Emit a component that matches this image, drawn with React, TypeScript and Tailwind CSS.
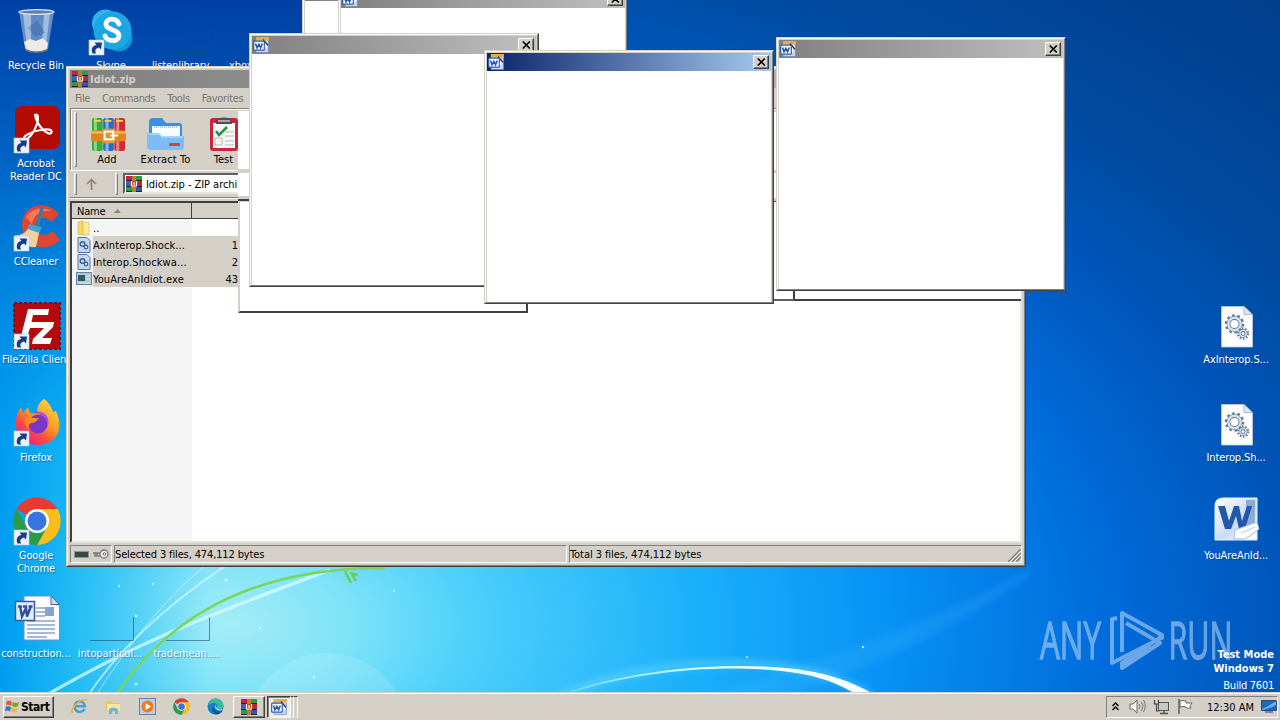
import type { ReactNode } from "react";

const FONT = "font-['DejaVu_Sans_Condensed','DejaVu_Sans',sans-serif]";

function Wallpaper() {
  return (
    <svg className="absolute inset-0" width="1280" height="720" viewBox="0 0 1280 720">
      <defs>
        <radialGradient id="sky" gradientUnits="userSpaceOnUse" cx="0" cy="0" r="1" gradientTransform="translate(230 625) scale(1560 910)">
          <stop offset="0" stopColor="#a4edf6" />
          <stop offset=".077" stopColor="#7ee3f8" />
          <stop offset=".154" stopColor="#4dd0fb" />
          <stop offset=".3" stopColor="#1cb0fa" />
          <stop offset=".43" stopColor="#0690f6" />
          <stop offset=".56" stopColor="#006cdc" />
          <stop offset=".68" stopColor="#0055b8" />
          <stop offset=".78" stopColor="#004aa0" />
          <stop offset="1" stopColor="#003c86" />
        </radialGradient>
        <linearGradient id="left" x1="0" x2="1" y1="0" y2="0">
          <stop offset="0" stopColor="#009cf0" />
          <stop offset=".35" stopColor="#04adf2" stopOpacity=".7" />
          <stop offset="1" stopColor="#00b0f5" stopOpacity="0" />
        </linearGradient>
        <linearGradient id="top" x1="0" x2="0" y1="0" y2="1">
          <stop offset="0" stopColor="#0040a4" />
          <stop offset=".35" stopColor="#0058bc" stopOpacity=".85" />
          <stop offset="1" stopColor="#0080e0" stopOpacity="0" />
        </linearGradient>
        <linearGradient id="arc" x1="0" x2="1" y1="0" y2="0">
          <stop offset="0" stopColor="#9ff" stopOpacity=".5" />
          <stop offset=".5" stopColor="#dff" />
          <stop offset="1" stopColor="#fff" />
        </linearGradient>
        <filter id="soft" x="-20%" y="-20%" width="140%" height="140%"><feGaussianBlur stdDeviation="3" /></filter>
        <filter id="fine"><feGaussianBlur stdDeviation=".7" /></filter>
      </defs>
      <rect width="1280" height="720" fill="url(#sky)" />
      <rect width="210" height="720" fill="url(#left)" />
      <rect width="480" height="450" fill="url(#top)" />
      <circle cx="327" cy="735" r="82" fill="#fff" opacity=".12" />
      <path d="M690 700 Q900 640 1030 568 L1030 576 Q910 660 770 700Z" fill="#5ac8ff" opacity=".14" filter="url(#soft)" />
      <g fill="none" filter="url(#fine)">
        <path d="M38 700 Q120 652 200 620 T330 570" stroke="#d6fbff" strokeWidth="3.5" opacity=".75" />
        <path d="M85 700 Q130 630 225 566" stroke="#d6fbff" strokeWidth="2" opacity=".7" />
        <path d="M93 700 Q150 610 205 566" stroke="#d6fbff" strokeWidth="1" opacity=".6" />
        <path d="M115 697 Q200 567 385 568" stroke="#7ad65a" strokeWidth="2.4" />
        <path d="M345 571 l6 12 M350 573 l8 2 M352 574 l4 7" stroke="#6ccf50" strokeWidth="2.5" />
      </g>
      <path d="M560 696 C640 660 790 645 872 696" fill="none" stroke="#7fe0ff" strokeWidth="8" opacity=".4" filter="url(#soft)" />
      <path d="M556 697 C620 672 690 666 740 666 C800 666 842 674 878 697 L860 697 C830 677 800 670 740 668.500 C690 667.500 620 675 556 697Z" fill="url(#arc)" filter="url(#fine)" />
      <g fill="#dff" opacity=".8">
        <circle cx="226" cy="580" r="1.5" /><circle cx="153" cy="584" r="1" /><circle cx="119" cy="586" r="1" /><circle cx="136" cy="616" r="1.3" />
        <circle cx="136" cy="684" r="1.5" /><circle cx="314" cy="677" r="1.3" /><circle cx="394" cy="591" r="1" /><circle cx="260" cy="628" r="1" /><circle cx="747" cy="657" r="1" /><circle cx="863" cy="647" r="1.2" />
      </g>
    </svg>
  );
}

function Shortcut({ dx = 0 }: { dx?: number }) {
  return (
    <g transform={`translate(${1 + dx} 32)`}>
      <rect width="15" height="15" fill="#eef3fa" stroke="#b9c8dc" strokeWidth=".6" />
      <path d="M3.5 13.5 C1.5 8.5 4 5.5 7.5 5 L5.5 2.5 L13 2.5 L12 9.5 L10 7.5 C6.5 8.5 5.5 10.5 7.2 13.5Z" fill="#173d87" />
    </g>
  );
}

const bin = (
  <g transform="translate(-1 0)">
    <path d="M7 3 L42 3 L36 41 Q24 47 13 41Z" fill="#7b9fcd" opacity=".8" />
    <path d="M11 5 L19 5 L19 40 L15 40Z M32 5 L38 5 L34 38 L30 38Z" fill="#c4d6ec" opacity=".65" />
    <path d="M16 20 L25 12 L33 25 L23 29Z" fill="#3560a0" opacity=".4" />
    <path d="M12 34 L18 31 L24 33 L31 30 L36 35 L35 41 Q24 46 14 41Z" fill="#eeeae6" />
    <ellipse cx="24.500" cy="4" rx="17.500" ry="2.300" fill="#5c7fae" stroke="#dce4ec" strokeWidth="1.300" />
    <path d="M13 41 Q24 46 36 41 L35 43 Q24 47 14 43Z" fill="#78736d" />
  </g>
);
const skype = (
  <g>
    <circle cx="17.500" cy="15" r="13.500" fill="#30b4ea" /><circle cx="31" cy="30" r="13.500" fill="#1494da" /><circle cx="24.500" cy="22.500" r="19" fill="#1ba6e4" />
    <path d="M31 16 C28 9 17.500 10 18 16.500 C18.500 23 31 20.500 31 28 C31 34 19 34 17 28" fill="none" stroke="#fff" strokeWidth="4.800" strokeLinecap="round" />
    <Shortcut />
  </g>
);
const acrobat = (
  <g>
    <rect x="2" y="0" width="45" height="43" rx="7" fill="#b30b00" />
    <path d="M22 9 C25 7 26 12 24 18 C21 27 15 34 12 33 C8 31 19 25 28 24 C38 22 40 25 38 27 C35 30 24 20 22 9Z" fill="none" stroke="#fff" strokeWidth="2.200" />
    <Shortcut />
  </g>
);
const ccleaner = (
  <g transform="translate(1 0)">
    <path d="M45 10 C33 -4 14 0 9 14 C6 23 10 37 22 42 C31 45 40 42 46 36 L39 27 C32 33 25 32 22 26 C19 16 28 9 38 18Z" fill="#df4630" />
    <path d="M12 13 C17 5 29 2 38 7 C26 6 20 11 18 20Z" fill="#f4775a" />
    <path d="M28 4 L23 24" stroke="#367cac" strokeWidth="3.500" />
    <path d="M15 20 L28 23 L25 30 L13 26Z" fill="#4a9fcd" />
    <path d="M14 25 L25 29 L22 43 C14 44 5 39 1 31 Q9 32 14 25Z" fill="#efd29d" />
    <Shortcut dx={-1} />
  </g>
);
const filezilla = (
  <g>
    <rect x="1" y="1" width="46" height="46" fill="#b40a0e" stroke="#7a0c18" strokeWidth="2" strokeDasharray="3 2" />
    <path d="M15 7 L36 7 L35 13 L20 13 L18.500 20 L27 20 L26 26 L17 26 L13 38 L7 38Z M25 20 L41 20 L40 25 L29 36 L39 36 L37 42 L19 42 L20 37 L31 26 L24 26Z" fill="#fff" />
    <Shortcut />
  </g>
);
const firefox = (
  <g transform="translate(1 -1)">
    <defs><linearGradient id="fx" x1="1" y1="0" x2=".3" y2="1"><stop stopColor="#ffe44a" /><stop offset=".5" stopColor="#ff9a25" /><stop offset=".75" stopColor="#fb4a45" /><stop offset="1" stopColor="#e8257c" /></linearGradient></defs>
    <path d="M30 0 C36 4 38 10 39 13 L42 12 C51 31 41 46 24 46 C9 46 0 34 2 20 C3 14 6 10 7 8 L9 14 L14 8 L16 14 L23 15 C23 8 25 3 30 0Z" fill="url(#fx)" />
    <circle cx="24" cy="25" r="9.500" fill="#7a36c8" />
    <path d="M14 17 Q20 20 25 19 Q22 24 17 24 Q13 26 15 31 Q7 22 14 17Z" fill="#ff8b22" />
    <path d="M19 13 C34 10 37 23 33 29 C35 19 27 15 19 13Z" fill="#b04be0" />
    <Shortcut dx={-1} />
  </g>
);
function ChromeShape() {
  return (
    <g>
      <path d="M24 24 L3.500 12 A24 24 0 0 1 44.500 12Z" fill="#e53b30" />
      <path d="M24 24 L44.500 12 A24 24 0 0 1 24 48 L34 30Z" fill="#fbbd18" />
      <path d="M24 24 L34 30 L24 48 A24 24 0 0 1 3.500 12 L14 30Z" fill="#2b9b48" />
      <path d="M24 12 L44.500 12 A24 24 0 0 1 47 20 L24 24Z" fill="#fbbd18" />
      <circle cx="24" cy="24" r="12" fill="#fff" /><circle cx="24" cy="24" r="9.500" fill="#3674e4" />
    </g>
  );
}
const chrome = <g><g transform="translate(0 -1)"><ChromeShape /></g><Shortcut /></g>;
const wordDoc = (
  <g>
    <path d="M11 0 L38 0 L46.500 8 L46.500 44 L11 44Z" fill="#fbfdff" stroke="#6d8fc2" />
    <path d="M38 0 L38 8.500 L46.500 8.500Z" fill="#cddcf2" stroke="#4167a0" />
    <path d="M23 12h9 M23 16h9 M23 20h9 M14 25h28 M14 29h28 M14 33h28 M14 37h28 M14 41h20" stroke="#8ba4cb" strokeWidth="1.300" />
    <rect x="32" y="11" width="9" height="9" fill="#88a3d0" />
    <rect x="2.500" y="5.500" width="19" height="19" fill="#e6eefc" stroke="#3459a8" strokeWidth="1.500" />
    <path d="M5 10.500h4M10 10.500h3M15.500 10.500h4 M7 10 L9 20.500 L13 12 L14 20.500 L18 10" fill="none" stroke="#2f4f9f" strokeWidth="2.400" />
  </g>
);
const ghost = <path d="M3 44.500 H46.500 V21" fill="none" stroke="#1c5070" strokeOpacity=".6" />;

function Gear({ x, y, r, s }: { x: number; y: number; r: number; s: number }) {
  return (
    <g transform={`translate(${x} ${y})`} fill="none">
      <circle r={r} stroke="#5e7690" strokeWidth={s + 1.5} strokeDasharray={`${r * 0.3} ${r * 0.3285}`} />
      <circle r={r - 1.5} stroke="#5e7690" strokeWidth={s + 0.8} />
      <circle r={r - 1.3} stroke="#d6e2ee" strokeWidth={s - 0.6} />
    </g>
  );
}
const dll = (
  <g>
    <path d="M8.500 4.500 H31 L39.500 12.500 V45 H8.500Z" fill="#fdfdfd" stroke="#c3ccd6" strokeWidth=".8" />
    <path d="M31 4.500 V12.500 H39.500Z" fill="#dfe6ee" stroke="#9caab8" strokeWidth=".8" />
    <Gear x={21.5} y={22} r={7.5} s={3} /><Gear x={30} y={31.5} r={4.4} s={2} />
  </g>
);
const wordApp = (
  <g transform="translate(1 -1)">
    <defs><linearGradient id="wa" x1="0" y1="0" x2="1" y2="1"><stop stopColor="#fff" /><stop offset=".55" stopColor="#c9dcf5" /><stop offset="1" stopColor="#fff" /></linearGradient></defs>
    <path d="M1 9 Q1 1 9 1 H43 V43 H1Z" fill="url(#wa)" stroke="#e8f2ff" />
    <path d="M32 3 H41 V28 H32Z" fill="#5c87c6" opacity=".6" />
    <path d="M4 9 H11 L15 24 L20 9 H25 L28 24 L33 9 H38 L31 32 H25 L22 19 L17 32 H11Z" fill="#2457a8" />
    <path d="M21 33 L43 25 L45 32 L31 42 H20Z" fill="#fff" stroke="#9fbde2" /><path d="M27 36 L41 30" stroke="#b7cce8" />
  </g>
);

type Item = { x: number; y: number; label: string; icon: ReactNode };
const items: Item[] = [
  { x: 36, y: 8, label: "Recycle Bin", icon: bin },
  { x: 111, y: 8, label: "Skype", icon: skype },
  { x: 186, y: 8, label: "listenlibrary....", icon: ghost },
  { x: 260, y: 8, label: "xboxstudio...", icon: ghost },
  { x: 36, y: 106, label: "Acrobat\nReader DC", icon: acrobat },
  { x: 36, y: 204, label: "CCleaner", icon: ccleaner },
  { x: 36, y: 302, label: "FileZilla Client", icon: filezilla },
  { x: 36, y: 400, label: "Firefox", icon: firefox },
  { x: 36, y: 498, label: "Google\nChrome", icon: chrome },
  { x: 36, y: 596, label: "construction...", icon: wordDoc },
  { x: 110, y: 596, label: "intoparticul...", icon: ghost },
  { x: 186, y: 596, label: "trademean....", icon: ghost },
  { x: 1236, y: 302, label: "AxInterop.S...", icon: dll },
  { x: 1236, y: 400, label: "Interop.Sh...", icon: dll },
  { x: 1236, y: 498, label: "YouAreAnId...", icon: wordApp },
];

function DesktopItem({ item }: { item: Item }) {
  return (
    <div className="absolute flex w-[90px] -translate-x-1/2 flex-col items-center" style={{ left: item.x, top: item.y }}>
      <svg className="ml-[2px]" width="48" height="48" viewBox="0 0 48 48" overflow="visible">{item.icon}</svg>
      <div className="mt-[3px] whitespace-pre text-center text-[11px] leading-[13px] tracking-[-0.1px] text-white [text-shadow:1px_1px_1px_#00306080]">{item.label}</div>
    </div>
  );
}

function Books({ size }: { size: number }) {
  return (
    <svg width={size} height={size} viewBox="0 0 36 36">
      <rect x="1" y="1" width="11" height="34" rx="2" fill="#37a948" /><rect x="3" y="1" width="3" height="34" fill="#84dc7c" />
      <rect x="12.500" y="1" width="11" height="34" rx="2" fill="#2c69c8" /><rect x="15" y="1" width="3" height="34" fill="#7bb8f4" />
      <rect x="24" y="1" width="11" height="34" rx="2" fill="#cf2a32" /><rect x="26" y="1" width="3" height="34" fill="#f08484" />
      <path d="M3 4h7M14 4h7M26 4h7" stroke="#f3d34e" strokeWidth="2" />
      <rect x="0" y="14" width="36" height="11" rx="2" fill="#df8420" /><path d="M0 16h36" stroke="#f9c05c" strokeWidth="2" />
      <rect x="12" y="12" width="13" height="15" fill="#d99a3c" /><rect x="14" y="15" width="9" height="8" fill="none" stroke="#fff" strokeWidth="2" /><path d="M20 19h8" stroke="#fff" strokeWidth="2" />
    </svg>
  );
}

function RarIcon() {
  return (
    <svg width="16" height="16" viewBox="0 0 16 16" className="shrink-0">
      <rect width="16" height="16" fill="#2b1b3c" />
      <path d="M0 0h7v4H0z" fill="#c02345" /><path d="M10 0h6v4h-6z" fill="#329c3c" />
      <path d="M0 5h6v5H0z" fill="#3e62ba" /><path d="M10 5h6v5h-6z" fill="#b52a34" />
      <path d="M0 11h6v4H0z" fill="#2d9c48" /><path d="M10 11h6v4h-6z" fill="#3553b5" />
      <path d="M6 0h4v16H6z" fill="#b8812b" /><path d="M5 5h6v6H5z" fill="#c23a24" /><path d="M5.500 5v5h5v-5M8 6v3" fill="none" stroke="#fff" strokeWidth="1.200" />
    </svg>
  );
}

function WordMini() {
  return (
    <svg width="16" height="16" viewBox="0 0 16 16" className="shrink-0">
      <path d="M3 .5h12.500v15H3z" fill="#c3d4f0" stroke="#6c86b3" strokeWidth=".6" /><path d="M3 0h13v3.500H3z" fill="#e9aa4a" />
      <path d="M9 3.500l5.500 5.500-4 4.500z" fill="#fff" /><path d="M10 2.500l5 6" stroke="#28365c" strokeWidth="1.200" />
      <rect x=".7" y="4.200" width="10.600" height="9" rx=".8" fill="#fff" stroke="#2a5bb5" strokeWidth="1.200" />
      <path d="M2.500 6.500l1.500 4.300 1.900-3.500 1.700 3.500 1.700-4.300" fill="none" stroke="#2457b0" strokeWidth="1.600" />
    </svg>
  );
}

function CloseButton() {
  return (
    <span className="flex h-[14px] w-[16px] items-center justify-center border border-t-white border-l-white border-r-[#404040] border-b-[#404040] bg-[#d4d0c8] shadow-[inset_-1px_-1px_0_#808080]">
      <svg width="9" height="8" viewBox="0 0 9 8"><path d="M.8.5l7 7M7.800.5l-7 7" stroke="#000" strokeWidth="1.600" /></svg>
    </span>
  );
}

function Popup({ x, y, active }: { x: number; y: number; active?: boolean }) {
  return (
    <div className="absolute flex h-[254px] w-[290px] flex-col border border-t-[#d4d0c8] border-l-[#d4d0c8] border-r-[#404040] border-b-[#404040] bg-white" style={{ left: x, top: y }}>
      <div className="flex grow flex-col border border-t-white border-l-white border-r-[#808080] border-b-[#808080] bg-[#d4d0c8] p-px pb-0">
        <div className={`flex h-[18px] items-center justify-between pl-px pr-[2px] ${active ? "bg-[linear-gradient(90deg,#0a246a,#a6caf0)]" : "bg-[linear-gradient(90deg,#808080,#c0c0c0)]"}`}>
          <WordMini /><CloseButton />
        </div>
        <div className="grow bg-white" />
      </div>
    </div>
  );
}

const clipText = "text-[11px] leading-[13px] whitespace-pre";

function FileGlyph({ kind }: { kind: "up" | "dll" | "exe" }) {
  return (
    <svg width="16" height="16" viewBox="0 0 16 16" className="shrink-0">
      {kind === "up" && <g><path d="M2 2l5-1v14l-5-1z" fill="#f4d766" stroke="#d8b342" strokeWidth=".6" /><path d="M7 2h6v13H7z" fill="#f9e896" stroke="#dbb94c" strokeWidth=".6" /></g>}
      {kind === "dll" && <g><path d="M2 .5h9l3 3v12H2z" fill="#c5d8ee" stroke="#57789e" /><circle cx="6.500" cy="7" r="2.300" fill="none" stroke="#3e608f" strokeWidth="1.400" /><circle cx="10" cy="10" r="1.800" fill="none" stroke="#3e608f" strokeWidth="1.200" /></g>}
      {kind === "exe" && <g><rect x=".5" y="1.500" width="15" height="12" fill="#b4c8dc" stroke="#6483a5" /><rect x="2" y="4" width="7" height="6" fill="#315d67" /><path d="M10 5h4M10 8h4M2 12h12" stroke="#dce8f4" /></g>}
    </svg>
  );
}

function Tool({ label, children, w }: { label: string; children: ReactNode; w: string }) {
  return (
    <div className={`flex shrink-0 flex-col items-center ${w}`}>
      <div className="flex h-[36px] items-center">{children}</div>
      <span className={`${clipText} mt-[1px] tracking-[0.1px]`}>{label}</span>
    </div>
  );
}

const rows: { kind: "up" | "dll" | "exe"; name: string; size: string }[] = [
  { kind: "up", name: "..", size: "" },
  { kind: "dll", name: "AxInterop.Shock...", size: "1" },
  { kind: "dll", name: "Interop.Shockwa...", size: "2" },
  { kind: "exe", name: "YouAreAnIdiot.exe", size: "43" },
];

function Archive() {
  return (
    <div className="absolute left-[66px] top-[66px] flex h-[501px] w-[960px] flex-col border border-t-[#d4d0c8] border-l-[#d4d0c8] border-r-[#404040] border-b-[#404040] bg-[#d4d0c8]">
      <div className="flex grow flex-col border border-t-white border-l-white border-r-[#808080] border-b-[#808080] p-[2px]">
        <div className="flex h-[18px] items-center gap-[2px] bg-[linear-gradient(90deg,#808080,#c0c0c0)] pl-[2px]">
          <RarIcon /><span className="text-[11px] font-bold leading-[13px] text-[#d4d0c8]">Idiot.zip</span>
        </div>
        <div className={`flex h-[20px] items-center gap-[12px] pl-[5px] tracking-[-0.35px] text-[#77736d] ${clipText}`}>
          <span>File</span><span>Commands</span><span>Tools</span><span>Favorites</span>
        </div>
        <div className="flex h-[62px] border-t border-l border-[#808080] shadow-[inset_1px_1px_0_#fff]">
          <div className="mx-[3px] my-[3px] w-[3px] border border-l-white border-t-white border-r-[#808080] border-b-[#808080]" />
          <div className="flex items-start pt-[7px]">
            <Tool label="Add" w="w-[54px]"><div className="ml-[2px]"><Books size={35} /></div></Tool>
            <Tool label="Extract To" w="w-[63px]">
              <svg width="38" height="36" viewBox="0 0 38 36"><path d="M2 6q0-4 4-4h9l4 5h13q3 0 3 3v10H2z" fill="#3b8ee2" /><path d="M5 10h28v12H5z" fill="#f8fbff" /><path d="M7 11h24" stroke="#b3c8dd" strokeWidth="2" strokeDasharray="1 1" /><path d="M0 17h12l3 3h22v10q0 4-4 4H4q-4 0-4-4z" fill="#7cbdf6" /><path d="M1 18h11l3 3h21" fill="none" stroke="#c8e7ff" /><rect x="22" y="27" width="11" height="3" rx="1" fill="#d64438" /></svg>
            </Tool>
            <Tool label="Test" w="w-[53px]">
              <svg width="30" height="36" viewBox="0 0 30 36"><rect x="1" y="2" width="28" height="33" rx="3" fill="#cf2438" /><path d="M4 7h22v25H4z" fill="#f8f8f6" /><path d="M7 3q8-3 16 0v5H7z" fill="#4f4d50" /><path d="M9 5h12" stroke="#c9c6c2" strokeWidth="1.500" /><path d="M7 15l3 4 8-8" fill="none" stroke="#269044" strokeWidth="2.500" /><path d="M6 22h7v7H6zM16 16h9M16 20h9M16 25h9M16 29h9" fill="none" stroke="#b8b8b8" /></svg>
            </Tool>
          </div>
        </div>
        <div className="flex h-[28px] items-center border-b border-[#808080] pl-[4px] shadow-[inset_0_1px_0_#fff]">
          <div className="h-[22px] w-[3px] border border-l-white border-t-white border-r-[#808080] border-b-[#808080]" />
          <svg className="ml-[8px]" width="13" height="12" viewBox="0 0 13 12"><path d="M6.500 12V2M2 6l4.500-4.500L11 6" fill="none" stroke="#8b8781" strokeWidth="1.700" /></svg>
          <div className="ml-[17px] h-[22px] w-[3px] border border-l-white border-t-white border-r-[#808080] border-b-[#808080]" />
          <div className="ml-[5px] flex h-[21px] w-[115px] items-center gap-[4px] overflow-hidden border-2 border-r-0 border-t-[#606060] border-l-[#606060] border-b-[#e8e5e0] bg-white pl-px pt-px">
            <RarIcon /><span className={`${clipText} tracking-[-0.05px]`}>Idiot.zip - ZIP archi</span>
          </div>
        </div>
        <div className="h-[3px] border-t border-white" />
        <div className="flex h-[342px] flex-col border-2 border-t-[#404040] border-l-[#404040] border-r-[#e6e3dd] border-b-[#e6e3dd] bg-[linear-gradient(90deg,#f5f5f5_120px,#fff_120px)]">
          <div className="flex h-[16px] w-[167px] border-b border-[#404040] bg-[#d4d0c8]">
            <div className={`flex w-[120px] items-center gap-[9px] border-r border-[#404040] pl-[5px] pt-px tracking-[-0.2px] ${clipText}`}>Name<svg width="7" height="4" viewBox="0 0 7 4"><path d="M0 4l3.500-4L7 4z" fill="#8b8781" /></svg></div>
          </div>
          {rows.map((r) => (
            <div key={r.name} className={`flex h-[17px] w-[167px] items-center pl-[4px] ${clipText}`}>
              <FileGlyph kind={r.kind} />
              <div className={`ml-px flex h-[17px] w-[146px] items-center justify-between pr-px pt-px ${r.size ? "bg-[#d4d0c8]" : ""}`}><span className="tracking-[0.1px]">{r.name}</span><span>{r.size}</span></div>
            </div>
          ))}
        </div>
        <div className={`flex grow gap-[2px] pt-[2px] ${clipText}`}>
          <div className="flex w-[42px] items-center gap-[3px] border border-t-[#808080] border-l-[#808080] border-r-white border-b-white pl-[3px]">
            <svg width="15" height="7" viewBox="0 0 15 7"><rect x=".5" y=".5" width="14" height="6" fill="#394947" stroke="#8a9a94" /></svg>
            <svg width="17" height="10" viewBox="0 0 17 10"><path d="M1 4h9M3 4v3h2V4M6 7h2" fill="none" stroke="#777" strokeWidth="1.500" /><circle cx="12" cy="5" r="4" fill="#eee" stroke="#777" strokeWidth="1.300" /><circle cx="12.500" cy="5" r="1.300" fill="#fff" stroke="#666" /></svg>
          </div>
          <div className="flex w-[453px] items-center border border-t-[#808080] border-l-[#808080] border-r-white border-b-white tracking-[-0.13px]">Selected 3 files, 474,112 bytes</div>
          <div className="flex grow items-center justify-between border border-t-[#808080] border-l-[#808080] border-r-white border-b-white tracking-[-0.07px]">Total 3 files, 474,112 bytes
            <svg className="self-end" width="13" height="13" viewBox="0 0 13 13"><path d="M0 13L13 0M4 13l9-9M8 13l5-5" stroke="#808080" strokeWidth="1.500" /><path d="M2 13L13 2M6 13l7-7" stroke="#fff" /></svg>
          </div>
        </div>
      </div>
    </div>
  );
}

function Logo() {
  return (
    <svg className="absolute left-[1026px] top-[586px]" width="220" height="100" viewBox="1026 586 220 100" opacity=".55">
      <g fill="#c2dcf8" stroke="#c2dcf8" strokeWidth="1.300" fontFamily="'Open Sans', sans-serif" fontSize="50.500">
        <text x="1040" y="658.500" textLength="61" lengthAdjust="spacingAndGlyphs">ANY</text>
        <text x="1168.500" y="658.500" textLength="64" lengthAdjust="spacingAndGlyphs">RUN</text>
      </g>
      <g fill="none" stroke="#c2dcf8" strokeWidth="4" strokeLinejoin="round">
        <path d="M1122 652V613L1162 635V638L1158 636" />
        <path d="M1117 618L1112 619V663L1163 637" />
        <path d="M1126 623L1160 643L1122 668V663L1151 645" />
      </g>
    </svg>
  );
}

function Taskbar() {
  return (
    <div className="absolute inset-x-0 bottom-0 flex h-[28px] items-center border-t border-[#d4d0c8] bg-[#d4d0c8] pl-[3px] pr-[2px] shadow-[inset_0_1px_0_#fff]">
      <div className="flex h-[22px] w-[51px] items-center gap-px border border-t-white border-l-white border-r-[#404040] border-b-[#404040] pl-px shadow-[inset_-1px_-1px_0_#808080]">
        <svg width="15" height="14" viewBox="0 0 15 14" className="shrink-0"><path d="M2 1q3-1 5 1L6 6Q3 4 1 5z" fill="#e65a28" /><path d="M8 2q3 2 6 0l-1 4q-3 2-6 0z" fill="#69aa2e" /><path d="M1 6.500q3-1 5 1l-1 4Q3 10 0 11z" fill="#2f75c8" /><path d="M7 7.500q3 2 6 0l-1 4q-3 2-6 0z" fill="#f2b826" /></svg>
        <span className="text-[12px] font-bold leading-[14px] tracking-[-0.45px]">Start</span>
      </div>
      <div className="ml-[17px] flex items-center gap-[17px]">
        <svg width="17" height="17" viewBox="0 0 17 17"><path d="M13.500 11A5.200 5.200 0 1 1 14 8.300H5" fill="none" stroke="#3ba0dc" strokeWidth="2.500" /><path d="M1.500 15C-1 11 10-1 16 2.500" fill="none" stroke="#e7b52f" strokeWidth="1.600" /></svg>
        <svg width="17" height="17" viewBox="0 0 17 17"><path d="M1 3h6l1 2h7v9H1z" fill="#ecc660" /><path d="M2 6h13v7H2z" fill="#fae7a2" /><path d="M4 16v-5q4-3 9 0v5h-3v-3H7v3z" fill="#6fb8dc" /></svg>
        <svg width="17" height="17" viewBox="0 0 17 17"><rect x=".5" y=".5" width="16" height="16" fill="#b8d1e8" stroke="#5d86ad" /><circle cx="8.500" cy="8.500" r="6" fill="#f07b18" /><path d="M6.500 5l5.500 3.500L6.500 12z" fill="#fff" /></svg>
        <svg width="17" height="17" viewBox="0 0 48 48"><ChromeShape /></svg>
        <svg width="17" height="17" viewBox="0 0 17 17"><circle cx="8.500" cy="8.500" r="8" fill="#167fc8" /><path d="M1 7Q3 0 9 .5q7 .5 7.500 7 0 4-5 3.500-3-1-1-3Q9 4 5 5z" fill="#37bd9e" /><path d="M7 8q-1 6 7 5.500l2-1q-3 4-7 4-6-3-2-8.500z" fill="#0f539f" /><path d="M9 7q-1 5 7 4-3 3-7 0-2-2 0-4z" fill="#d4d0c8" /></svg>
      </div>
      <div className="ml-[9px] flex h-[22px] w-[32px] items-center justify-center border border-t-white border-l-white border-r-[#404040] border-b-[#404040] shadow-[inset_-1px_-1px_0_#808080]"><RarIcon /></div>
      <div className="ml-[2px] flex h-[22px] w-[24px] items-center border border-t-[#404040] border-l-[#404040] border-r-white border-b-white bg-[#eeece8] pl-[3px] shadow-[inset_1px_1px_0_#808080]"><WordMini /></div>
      <div className="h-[22px] w-[3px] border-r border-t border-r-white border-t-[#404040]" />
      <div className="h-[22px] w-[4px] border-r border-t border-r-white border-t-[#404040]" />
      <div className="ml-auto flex h-[22px] w-[172px] items-center border border-t-[#808080] border-l-[#808080] border-r-white border-b-white pl-[5px]">
        <svg width="7" height="9" viewBox="0 0 7 9"><path d="M.5 4l3-3 3 3M.5 8l3-3 3 3" fill="none" stroke="#000" strokeWidth="1.400" /></svg>
        <svg className="ml-[10px]" width="17" height="15" viewBox="0 0 17 15"><path d="M1 5h3l4-4v13l-4-4H1z" fill="#fff" stroke="#666" /><path d="M10 5q2 2 0 5M12.500 3q3 4 0 9M14.500 1q3.500 6 0 12" fill="none" stroke="#777" /></svg>
        <svg className="ml-[7px]" width="17" height="16" viewBox="0 0 17 16"><rect x="5.500" y="3.500" width="10" height="8" fill="#c5c9c8" stroke="#555" /><path d="M7 14.500h8M11 12v2" stroke="#555" strokeWidth="1.500" /><path d="M1.500 1v4h4V1M3.500 5v7h3" fill="none" stroke="#444" strokeWidth="1.200" /></svg>
        <svg className="ml-[7px]" width="17" height="15" viewBox="0 0 17 15"><path d="M2 0v15" stroke="#666" strokeWidth="1.600" /><path d="M3 2q3-1 6 0v2h6l-2 3 1 2q-4 1-5-1-3-1-6 0z" fill="#fff" stroke="#666" /></svg>
        <span className={`${clipText} ml-[13px] pt-px`}>12:30 AM</span>
        <svg className="ml-[7px]" width="16" height="13" viewBox="0 0 16 13"><path d="M.5.500h15v10H.5z" fill="#2168bd" stroke="#264e80" /><path d="M1 9Q7 7 15 1v4Q8 9 1 10z" fill="#65b4e9" /><path d="M4 12h8" stroke="#58718c" strokeWidth="1.500" /></svg>
      </div>
    </div>
  );
}

export default function App() {
  return (
    <div className={`relative h-[720px] w-[1280px] overflow-hidden bg-[#0060c0] text-black ${FONT}`}>
      <Wallpaper />
      {items.map((i) => <DesktopItem key={i.label} item={i} />)}
      <Archive />
      <div className="absolute left-[238px] top-[111px] flex h-[91px] w-[12px] flex-col bg-[#d4d0c8]">
        <div className="h-[58px] bg-white" /><div className="mt-[4px] h-[23px] bg-white" />
        <div className="mt-[3px] h-[2px] bg-[#404040]" />
      </div>
      <div className="absolute left-[700px] top-[112px] flex h-[189px] w-[321px] flex-col border-b-2 border-[#404040] bg-white">
        <div className="mt-[58px] h-[3px] bg-[#d4d0c8]" /><div className="mt-[25px] h-[4px] border-b border-[#404040] bg-[#d4d0c8]" />
      </div>
      <div className="absolute left-[700px] top-[202px] h-[99px] w-[95px] border-2 border-t-0 border-l-0 border-r-[#404040] border-b-[#606060] bg-white" />
      <div className="absolute left-[238px] top-[202px] h-[111px] w-[290px] border-2 border-t-0 border-l-[#d4d0c8] border-r-[#404040] border-b-[#404040] bg-white" />
      <Popup x={302} y={-20} />
      <Popup x={338} y={-13} />
      <Popup x={249} y={33} />
      <Popup x={776} y={37} />
      <Popup x={484} y={50} active />
      <Logo />
      <div className="absolute right-[6px] top-[648px] text-right text-[11px] text-white">
        <div className="font-bold leading-[14px]">Test Mode<br />Windows 7</div>
        <div className="mt-[3px] leading-[13px] tracking-[-0.25px]">Build 7601</div>
      </div>
      <Taskbar />
    </div>
  );
}
